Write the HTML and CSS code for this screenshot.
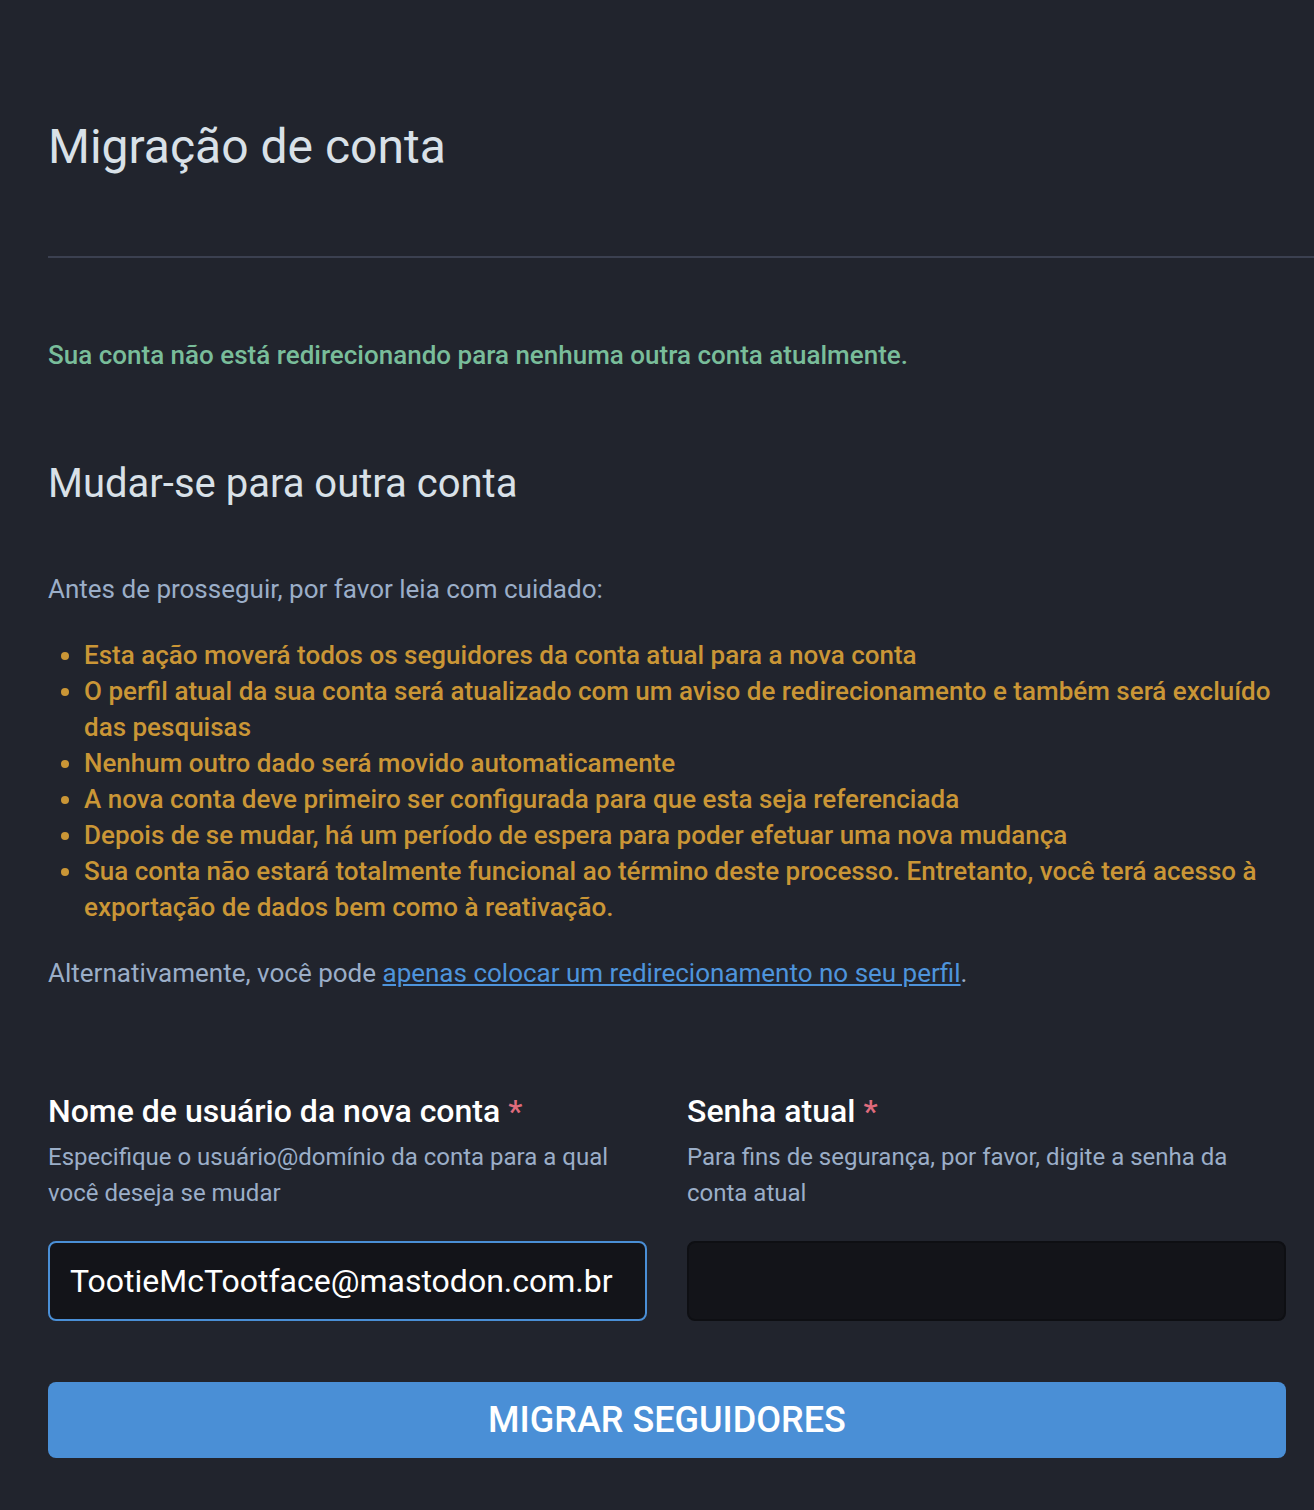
FILE: index.html
```html
<!DOCTYPE html>
<html lang="pt-BR">
<head>
<meta charset="utf-8">
<title>Migração de conta</title>
<link rel="stylesheet" href="styles.css">
</head>
<body>
<div class="content">
  <div class="content-heading">
    <h1>Migração de conta</h1>
  </div>

  <p class="positive-hint">Sua conta não está redirecionando para nenhuma outra conta atualmente.</p>

  <h3 class="section-title">Mudar-se para outra conta</h3>

  <p class="intro">Antes de prosseguir, por favor leia com cuidado:</p>

  <ul class="warning-list">
    <li>Esta ação moverá todos os seguidores da conta atual para a nova conta</li>
    <li>O perfil atual da sua conta será atualizado com um aviso de redirecionamento e também será excluído das pesquisas</li>
    <li>Nenhum outro dado será movido automaticamente</li>
    <li>A nova conta deve primeiro ser configurada para que esta seja referenciada</li>
    <li>Depois de se mudar, há um período de espera para poder efetuar uma nova mudança</li>
    <li>Sua conta não estará totalmente funcional ao término deste processo. Entretanto, você terá acesso à exportação de dados bem como à reativação.</li>
  </ul>

  <p class="intro">Alternativamente, você pode <a href="#" class="link">apenas colocar um redirecionamento no seu perfil</a>.</p>

  <form class="migrate-form">
    <div class="fields-row">
      <div class="field">
        <label class="field-label">Nome de usuário da nova conta <abbr class="req">*</abbr></label>
        <p class="field-hint">Especifique o usuário@domínio da conta para a qual você deseja se mudar</p>
        <input class="text-input focused" type="text" value="TootieMcTootface@mastodon.com.br">
      </div>
      <div class="field">
        <label class="field-label">Senha atual <abbr class="req">*</abbr></label>
        <p class="field-hint">Para fins de segurança, por favor, digite a senha da conta atual</p>
        <input class="text-input" type="password" value="">
      </div>
    </div>
    <button type="button" class="submit-btn">Migrar seguidores</button>
  </form>
</div>
</body>
</html>
```

FILE: styles.css
```css
* {
  box-sizing: border-box;
}

html, body {
  margin: 0;
  padding: 0;
  background: #21242d;
}

body {
  font-family: Roboto, "Noto Sans", "Liberation Sans", sans-serif;
  color: #9baec8;
  overflow: hidden;
}

.content {
  padding: 119px 28px 60px 48px;
}

.content-heading {
  margin-right: -28px;
  padding-bottom: 81px;
  border-bottom: 2px solid #3b4050;
}

.content-heading h1 {
  margin: 0;
  font-size: 48px;
  line-height: 56px;
  font-weight: 400;
  color: #d9e1e8;
}

.positive-hint {
  margin: 79px 0 0;
  font-size: 26px;
  line-height: 36px;
  font-weight: 500;
  color: #79bd9a;
}

.section-title {
  margin: 87px 0 0;
  font-size: 40px;
  line-height: 48px;
  font-weight: 400;
  color: #d9e1e8;
}

.intro {
  margin: 63px 0 0;
  font-size: 26px;
  line-height: 36px;
  font-weight: 400;
  color: #9baec8;
}

.warning-list {
  margin: 30px 0 0;
  padding: 0 0 0 36px;
  list-style: disc;
  font-size: 26px;
  line-height: 36px;
  font-weight: 500;
  color: #ca9636;
}

.warning-list + .intro {
  margin-top: 30px;
}

.link {
  color: #4e94dc;
  text-decoration: underline;
}

.migrate-form {
  margin-top: 100px;
}

.fields-row {
  display: grid;
  grid-template-columns: 1fr 1fr;
  column-gap: 40px;
}

.field {
  display: flex;
  flex-direction: column;
}

.field-label {
  font-size: 32px;
  line-height: 40px;
  font-weight: 500;
  color: #ffffff;
}

.req {
  color: #df6b7c;
  text-decoration: none;
  border: 0;
}

.field-hint {
  margin: 8px 0 0;
  font-size: 24px;
  line-height: 36px;
  color: #9baec8;
}

.text-input {
  margin-top: 30px;
  height: 80px;
  padding: 0 20px;
  background: #131419;
  border: 2px solid #0e0f13;
  border-radius: 8px;
  font-family: Roboto, "Noto Sans", "Liberation Sans", sans-serif;
  font-size: 32px;
  color: #ffffff;
  outline: none;
  width: 100%;
}

.text-input.focused {
  border-color: #4a8fd6;
}

.submit-btn {
  display: block;
  width: 100%;
  margin-top: 61px;
  padding: 20px;
  background: #4a8fd6;
  border: 0;
  border-radius: 8px;
  font-family: Roboto, "Noto Sans", "Liberation Sans", sans-serif;
  font-size: 36px;
  line-height: 36px;
  font-weight: 500;
  text-transform: uppercase;
  color: #ffffff;
}
```
